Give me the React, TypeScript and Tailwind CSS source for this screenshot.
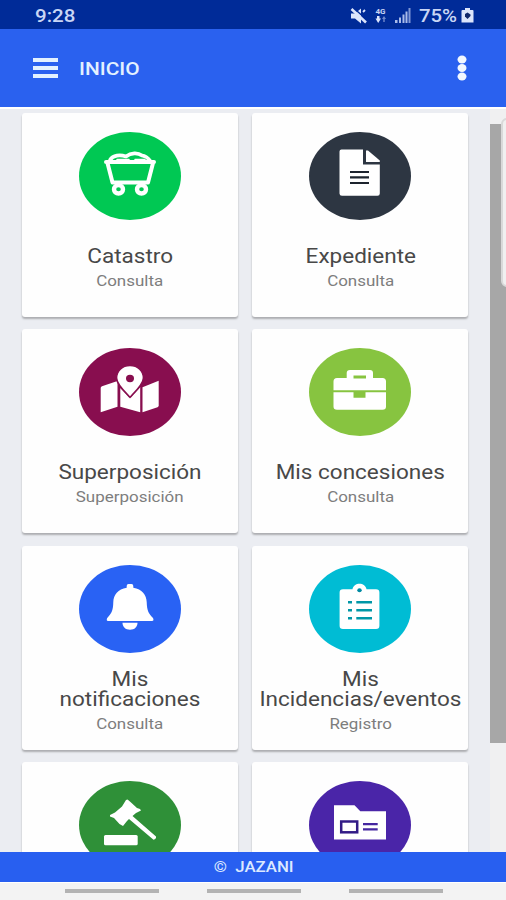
import React from 'react'

const CartIcon = () => (
  <g fill="none" stroke="#fff" strokeLinejoin="round" strokeLinecap="round">
    <path d="M27 30H75M28.5 31L33.5 50.5H69L74 31" strokeWidth="4" />
    <path d="M31 28C34 23 41 22.5 47 24.5C52 20.5 59 20.5 63 23.5C67 24 69 26 71 28.5" strokeWidth="3.6" />
    <path d="M38 27.5H50M56 27.5H66" strokeWidth="1.5" />
    <ellipse cx="39.5" cy="57.3" rx="4.5" ry="4.2" strokeWidth="4.4" />
    <ellipse cx="62.5" cy="57.3" rx="4.5" ry="4.2" strokeWidth="4.4" />
  </g>
)

const FileIcon = () => (
  <g>
    <path d="M32.5 17.5H54V32.5H70.8V61.5Q70.8 63.8 68.5 63.8H33Q30.5 63.8 30.5 61.5V19.5Q30.5 17.5 32.5 17.5Z" fill="#fff" />
    <path d="M57 18.5H59L70.8 28.5V30H57Z" fill="#fff" />
    <path d="M41 40H60M41 45.4H60M41 51H60" stroke="#1d242e" strokeWidth="2.2" />
  </g>
)

const MapIcon = () => (
  <g>
    <path d="M21.7 40Q21.7 38.8 23 38.3L38.5 33V58.7L21.7 64.3Z" fill="#fff" />
    <path d="M41.3 40L51 50L61.2 39V64.3L41.3 58.7Z" fill="#fff" />
    <path d="M63.5 39.3L79.7 32.8V57.5Q79.7 58.7 78.5 59.2L63.5 64.3Z" fill="#fff" />
    <path
      d="M51 17.5C43 17.5 37.6 23 37.6 30C37.6 36 45 43 51 49.3C57 43 64.4 36 64.4 30C64.4 23 59 17.5 51 17.5Z"
      fill="#fff"
      stroke="#880e4f"
      strokeWidth="1.5"
    />
    <ellipse cx="51" cy="30.5" rx="4" ry="3.7" fill="#880e4f" />
  </g>
)

const BriefcaseIcon = () => (
  <g fill="#fff">
    <path fillRule="evenodd" d="M41 22H61Q64 22 64 25V30H73.5Q77 30 77 33.5V42.2H24.5V33.5Q24.5 30 28 30H37.7V25Q37.7 22 41 22ZM44.5 27.5V30.5H57V27.5Z" />
    <path d="M24.5 44.3H44.5V49.7H56.5V44.3H77V58.5Q77 61.8 73.5 61.8H28Q24.5 61.8 24.5 58.5Z" />
  </g>
)

const BellIcon = () => (
  <g fill="#fff">
    <path d="M47.7 21Q47.7 19 49.5 19H52.5Q54.3 19 54.3 21V22.8C63 24 67.5 30 67.7 37C67.9 46 70 49 74 53Q75.3 56 73 56H29Q27 56 28.2 53C32 49 34.2 46 34.3 37C34.5 30 39 24 47.7 22.8Z" />
    <path d="M43.5 57.8H58.5C58.5 62 55.5 64.8 51 64.8S43.5 62 43.5 57.8Z" />
  </g>
)

const ClipboardIcon = () => (
  <g>
    <path d="M34 24.3H43.5C44.5 16.8 56.5 16.8 57.5 24.3H67Q70.4 24.3 70.4 27.5V60.8Q70.4 64 67 64H34Q30.6 64 30.6 60.8V27.5Q30.6 24.3 34 24.3Z" fill="#fff" />
    <ellipse cx="50.5" cy="25.3" rx="2.2" ry="2" fill="#008ba3" />
    <path d="M39 37.3H43M47.3 37.3H63M39 45.3H43M47.3 45.3H63M39 53.3H43M47.3 53.3H63" stroke="#0097a7" strokeWidth="2.5" />
  </g>
)

const GavelIcon = () => (
  <g fill="#fff">
    <path d="M48.5 18.5L51.5 21L58 27L61 28L62 29.5L57 32L53.5 35L77 55.5Q77.5 58 74.5 58.7L50 38L48 40L44 45L40.5 43L35 37L31 35.5V34L36 31.5L43 25.5L47 19Z" />
    <rect x="25" y="54" width="33.7" height="10.3" rx="1.5" />
  </g>
)

const FolderIcon = () => (
  <g>
    <path d="M25 24.2H45.5L51.3 30.2H77V58.5H25Z" fill="#fff" />
    <rect x="32.2" y="40.5" width="16" height="10.8" fill="none" stroke="#321b86" strokeWidth="2.5" />
    <path d="M54 43.2H68.7M54 48.4H68.7" stroke="#4527a0" strokeWidth="2.3" />
  </g>
)

const items = [
  { title: 'Catastro', subtitle: 'Consulta', color: '#00c853', icon: <CartIcon /> },
  { title: 'Expediente', subtitle: 'Consulta', color: '#2d3642', icon: <FileIcon /> },
  { title: 'Superposición', subtitle: 'Superposición', color: '#880e4f', icon: <MapIcon /> },
  { title: 'Mis concesiones', subtitle: 'Consulta', color: '#87c440', icon: <BriefcaseIcon /> },
  { title: 'Mis\nnotificaciones', subtitle: 'Consulta', color: '#2962f4', icon: <BellIcon /> },
  { title: 'Mis\nIncidencias/eventos', subtitle: 'Registro', color: '#00bcd4', icon: <ClipboardIcon /> },
  { title: '', subtitle: '', color: '#2f9038', icon: <GavelIcon /> },
  { title: '', subtitle: '', color: '#4a25a8', icon: <FolderIcon /> },
]

const StatusBar = () => (
  <div className="flex h-[29px] items-center bg-[#002b98] pr-[32px] pl-[35px] pt-0.5 text-[#c9d6f5]">
    <span className="inline-block origin-left scale-x-[1.14] text-[18px] font-medium">9:28</span>
    <div className="ml-auto flex items-center">
      <svg className="mr-[7px] h-[16px] w-[17px]" viewBox="0 0 17 16">
        <path d="M1 5.5H5L11 0.5V15.5L5 10.5H1Z" fill="#dce5fb" />
        <path d="M3.5 0L17 12" stroke="#002b98" strokeWidth="1.5" />
        <path d="M1.5 1L16 14.5" stroke="#dce5fb" strokeWidth="2.6" />
        <path d="M13 4L15 2" stroke="#dce5fb" strokeWidth="1.8" />
      </svg>
      <div className="mr-[8px] flex w-[13px] flex-col items-center">
        <span className="text-[8px] leading-[8px] font-bold">4G</span>
        <svg className="h-[7px] w-[12px]" viewBox="0 0 12 7">
          <path d="M2 0H4.5V2.5H6L3.2 7L0.5 2.5H2Z" fill="#dce5fb" />
          <path d="M9 0L11 3H9.7V6H8.3V3H7Z" fill="#6f88cb" />
        </svg>
      </div>
      <svg className="mr-[8px] h-[15px] w-[16px]" viewBox="0 0 16 15">
        <path d="M0 12H2.5V15H0ZM4 9.5H6V15H4ZM7.5 6.5H9.5V15H7.5ZM10.5 3.5H12.5V15H10.5Z" fill="#a9bbe9" />
        <path d="M13.5 0H15.5V15H13.5Z" fill="#8098d6" />
      </svg>
      <span className="mr-[4px] w-[38px] text-[18px] font-medium">
        <span className="inline-block origin-left scale-x-[1.13]">75%</span>
      </span>
      <svg className="h-[15px] w-[13px]" viewBox="0 0 13 15">
        <path d="M4 0H9V2H11.5Q12.5 2 12.5 3V14.5H0.5V3Q0.5 2 1.5 2H4Z" fill="#dce5fb" />
        <path d="M4 6L6.5 4.5L9.5 6.5V8L6.5 11L4 8.5Z" fill="#10276a" />
      </svg>
    </div>
  </div>
)

const App = () => {
  return (
    <div className="flex h-[900px] w-[506px] flex-col overflow-hidden bg-[#ebedf2] font-['Roboto','Liberation_Sans',sans-serif]">
      <StatusBar />

      <header className="flex h-[78px] shrink-0 items-center bg-[#2a61ef] pr-[39px] pl-[33px] text-[#e3f1ff]">
        <div className="flex w-[25px] flex-col gap-1">
          <div className="h-1 bg-[#e3f1ff]" />
          <div className="h-1 bg-[#e3f1ff]" />
          <div className="h-1 bg-[#e3f1ff]" />
        </div>
        <h1 className="ml-[21px] origin-left scale-x-[1.1] pt-0.5 text-[19px] font-medium">INICIO</h1>
        <svg className="ml-auto h-[26px] w-[10px]" viewBox="0 0 10 26">
          <ellipse cx="5" cy="4.5" rx="4.5" ry="4" fill="#f2f8ff" />
          <ellipse cx="5" cy="13" rx="4.5" ry="4" fill="#f2f8ff" />
          <ellipse cx="5" cy="21.5" rx="4.5" ry="4" fill="#f2f8ff" />
        </svg>
      </header>

      <main className="flex h-[745px] shrink-0 overflow-hidden border-t-2 border-white">
        <div className="grid w-[469px] shrink-0 auto-rows-[204px] grid-cols-[216px_216px] gap-x-[14.4px] gap-y-[12.3px] pt-[4px] pl-[22px]">
          {items.map((item, index) => (
            <div
              key={index}
              className="flex flex-col items-center rounded-[3px] bg-[#fefefe] pt-[19px] text-center shadow-[0_2px_2px_rgba(0,0,0,0.27)]"
            >
              <svg className="h-[88px] w-[102px] shrink-0" viewBox="0 0 102 88">
                <ellipse cx="51" cy="44" rx="51" ry="44" fill={item.color} />
                {item.icon}
              </svg>
              <h2
                className={
                  item.title.includes('\n')
                    ? 'mt-[17px] scale-x-[1.155] text-[19.5px] leading-[20px] whitespace-pre text-[#484848]'
                    : 'mt-[27px] scale-x-[1.155] text-[19.5px] leading-[20px] whitespace-pre text-[#484848]'
                }
              >
                {item.title}
              </h2>
              <p className="mt-[4px] scale-x-[1.13] text-[15px] leading-[20px] text-[#7d7d7d]">{item.subtitle}</p>
            </div>
          ))}
        </div>

        {/* scroll track with the edge handle over it */}
        <div className="ml-auto flex w-4 flex-col bg-[#f0f0f1] pt-[15px]">
          <div className="h-[619px] bg-[#a7a7a7]">
            <div className="relative -top-[6px] left-[11px] h-[169px] w-[12px] rounded-[6px] border-2 border-[#d9d9d9] bg-[#f0f0f0]" />
          </div>
        </div>
      </main>

      <footer className="flex h-[30px] shrink-0 items-center justify-center bg-[#285ff0] pl-[2px] text-[15px] font-medium text-[#dce9ff]">
        <span className="scale-x-[1.12] whitespace-pre">©  JAZANI</span>
      </footer>

      <nav className="flex flex-1 gap-[48px] border-t border-white bg-[#f3f3f3] pt-[6px] pl-[65px]">
        <div className="h-1 w-[94px] bg-[#b3b3b3]" />
        <div className="h-1 w-[94px] bg-[#b3b3b3]" />
        <div className="h-1 w-[94px] bg-[#b3b3b3]" />
      </nav>
    </div>
  )
}

export default App
